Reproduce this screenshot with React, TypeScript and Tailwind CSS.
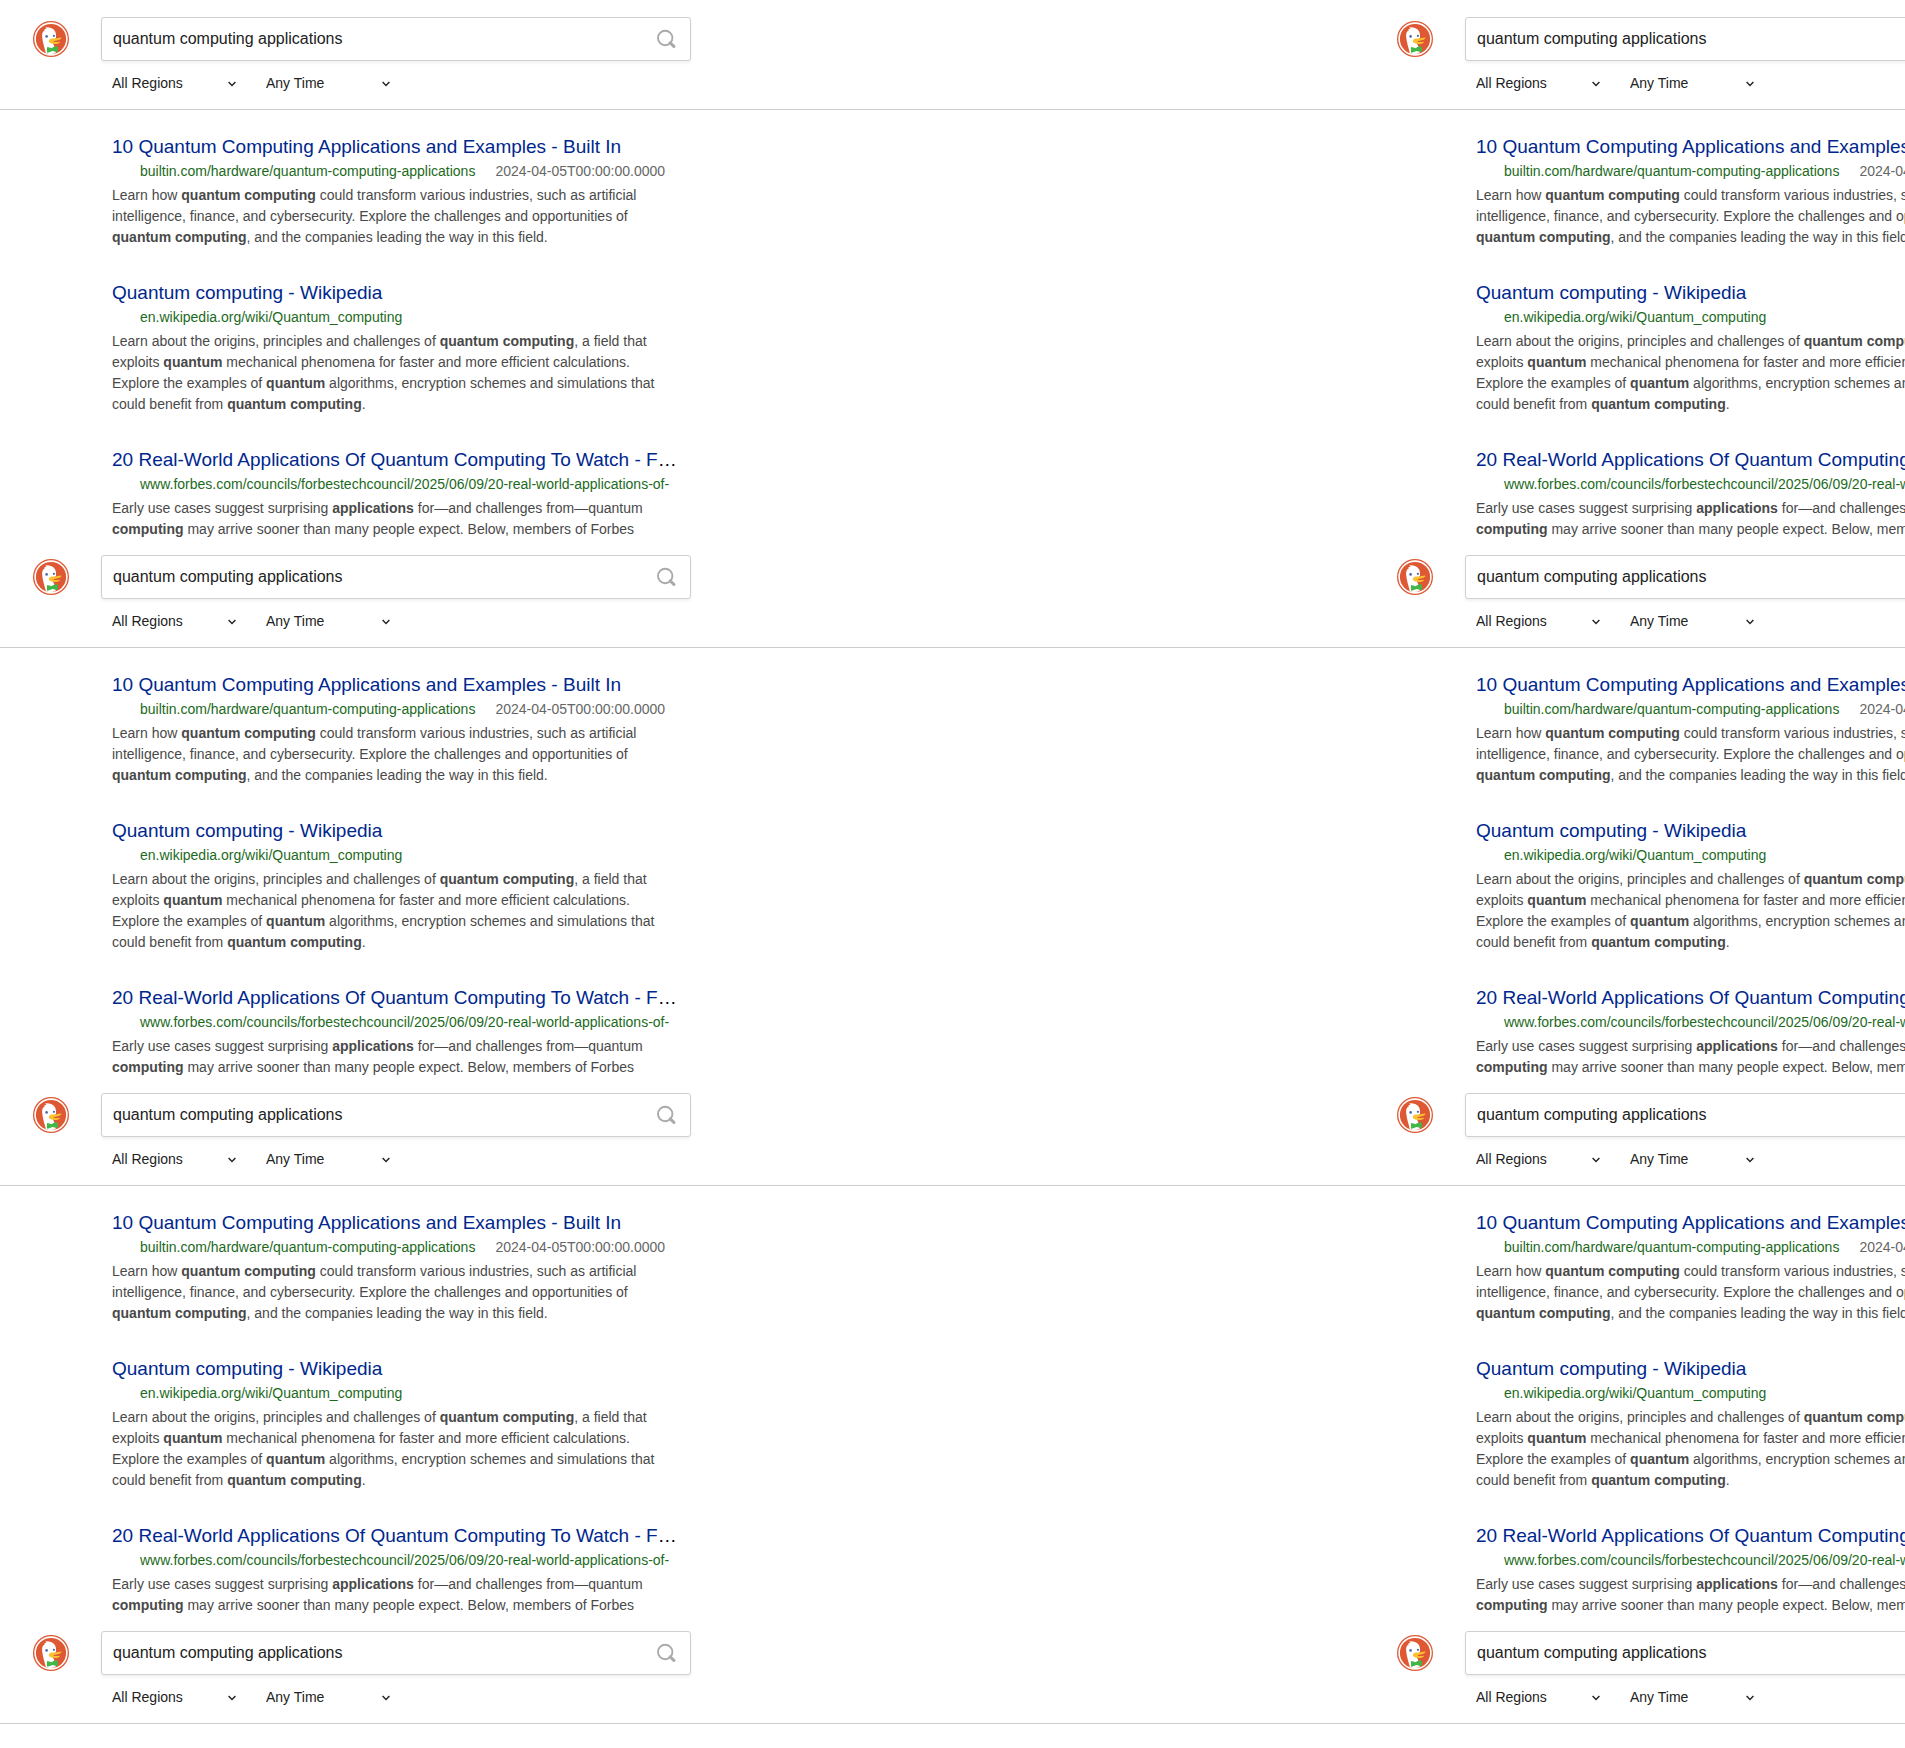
import type { ReactNode } from "react";

type Result = {
  title: string;
  url: string;
  date?: string;
  lines: ReactNode[];
};

const results: Result[] = [
  {
    title: "10 Quantum Computing Applications and Examples - Built In",
    url: "builtin.com/hardware/quantum-computing-applications",
    date: "2024-04-05T00:00:00.0000",
    lines: [
      <>Learn how <b>quantum computing</b> could transform various industries, such as artificial</>,
      <>intelligence, finance, and cybersecurity. Explore the challenges and opportunities of</>,
      <><b>quantum computing</b>, and the companies leading the way in this field.</>,
    ],
  },
  {
    title: "Quantum computing - Wikipedia",
    url: "en.wikipedia.org/wiki/Quantum_computing",
    lines: [
      <>Learn about the origins, principles and challenges of <b>quantum computing</b>, a field that</>,
      <>exploits <b>quantum</b> mechanical phenomena for faster and more efficient calculations.</>,
      <>Explore the examples of <b>quantum</b> algorithms, encryption schemes and simulations that</>,
      <>could benefit from <b>quantum computing</b>.</>,
    ],
  },
  {
    title: "20 Real-World Applications Of Quantum Computing To Watch - Forbes",
    url: "www.forbes.com/councils/forbestechcouncil/2025/06/09/20-real-world-applications-of-",
    lines: [
      <>Early use cases suggest surprising <b>applications</b> for—and challenges from—quantum</>,
      <><b>computing</b> may arrive sooner than many people expect. Below, members of Forbes</>,
    ],
  },
];

function DuckLogo() {
  return (
    <svg viewBox="0 0 36 36" className="size-9" aria-hidden="true">
      <circle cx="18" cy="18" r="18" fill="#de5833" />
      <circle cx="18" cy="18" r="16.7" fill="#fff" />
      <circle cx="18" cy="18" r="15.1" fill="#de5833" />
      <path
        d="M12.9 32.2C11.7 27.5 9.4 20.6 9.1 15.2C8.9 11.6 10.4 9.8 12.3 9L10.9 8.3C12 7.6 13 7.6 13.6 7.7L12.3 6.2C16.7 5.9 20.5 7.4 22 10.3C23 12.1 23.2 14.4 23 17L18.4 20L21 24.5L22.8 32.3C19.5 33.4 16 33.3 12.9 32.2Z"
        fill="#fff"
      />
      <circle cx="13.6" cy="15.4" r="1.3" fill="#4a66a8" />
      <circle cx="20.9" cy="14.8" r="1.1" fill="#4a66a8" />
      <path
        d="M15.8 20C16 17.9 18.6 17.4 20.6 17.5C23.4 17.6 26 16.3 28.3 16.4C28.9 17.7 26.2 18.9 23.8 19.4C21.8 19.9 20.6 20 20.5 20.4C20.4 21.2 23.8 21.2 26.8 20.7C27.5 21.6 25.2 23 21.7 22.9C18.6 22.8 15.7 21.8 15.8 20Z"
        fill="#fdc02e"
      />
      <path
        d="M14.2 26.1C15.7 26.2 17.2 26.8 18.3 27.3C20.1 26.2 22.4 25.2 24.5 25.3C25.1 27 25.1 29.4 24.7 31C22.6 30.8 20.8 30.4 19.3 30C17.9 30.6 16 31.8 14.2 31.8C13.7 29.8 13.7 27.6 14.2 26.1Z"
        fill="#43b649"
      />
    </svg>
  );
}

function SearchIcon() {
  return (
    <svg viewBox="0 0 20 20" className="size-5" fill="none" stroke="#aaa" aria-hidden="true">
      <circle cx="9.2" cy="9" r="7.2" strokeWidth="1.9" />
      <path d="M14.2 13.9L17.9 17.4" strokeWidth="3" strokeLinecap="round" />
    </svg>
  );
}

function Filter({ label, option }: { label: string; option: string }) {
  return (
    <div className="grid w-[124px] grid-cols-1 items-center">
      <select
        aria-label={label}
        className="col-start-1 row-start-1 h-6 w-full appearance-none bg-transparent text-[14px] text-[#222]"
      >
        <option>{option}</option>
      </select>
      <svg
        viewBox="0 0 8 6"
        className="pointer-events-none col-start-1 row-start-1 mt-0.5 h-1.5 w-2 justify-self-end"
        fill="none"
        stroke="#222"
        strokeWidth="1.4"
        aria-hidden="true"
      >
        <path d="M0.6 1L4 4.6L7.4 1" />
      </svg>
    </div>
  );
}

function ResultItem({ item }: { item: Result }) {
  return (
    <article className="mb-8">
      <h2 className="truncate text-[19px] leading-[26px]">
        <a href="#" className="text-[#00278e]">{item.title}</a>
      </h2>
      <div className="mb-[3px] flex gap-5 overflow-hidden pl-7 text-[14px] leading-[22px] whitespace-nowrap">
        <a href="#" className="text-[#1c6a1c]">{item.url}</a>
        {item.date && <span className="text-[#666]">{item.date}</span>}
      </div>
      <p className="text-[14px] leading-[21px] text-[#494949]">
        {item.lines.map((line, i) => (
          <span key={i} className="block whitespace-nowrap">{line}</span>
        ))}
      </p>
    </article>
  );
}

function SearchPage() {
  return (
    <section className="h-[538px] overflow-hidden">
      <header className="h-[110px] border-b border-[#ccc] pt-[17px]">
        <div className="flex items-start">
          <a href="#" aria-label="Home" className="mt-1 mr-8 ml-[33px]">
            <DuckLogo />
          </a>
          <div>
            <form className="flex h-11 w-[590px] items-center rounded-[3px] border border-[#d0d0d0] bg-white shadow-[0_2px_3px_rgba(0,0,0,0.06)]">
              <input
                type="text"
                aria-label="Search"
                defaultValue="quantum computing applications"
                className="h-full min-w-0 flex-1 bg-transparent pl-[11px] text-[16px] text-[#222] outline-none"
              />
              <button type="button" aria-label="Submit search" className="mr-3.5">
                <SearchIcon />
              </button>
            </form>
            <div className="mt-2.5 flex gap-[30px] pl-[11px]">
              <Filter label="Region" option="All Regions" />
              <Filter label="Time" option="Any Time" />
            </div>
          </div>
        </div>
      </header>
      <main className="ml-28 w-[568px] pt-6">
        {results.map((item) => (
          <ResultItem key={item.url} item={item} />
        ))}
      </main>
    </section>
  );
}

const tiles = ["a", "b", "c", "d", "e", "f", "g", "h"];

export default function App() {
  return (
    <div className="h-screen overflow-hidden bg-white font-['Liberation_Sans',Arial,sans-serif]">
      <div className="grid grid-cols-[1364px_1364px]">
        {tiles.map((id) => (
          <SearchPage key={id} />
        ))}
      </div>
    </div>
  );
}
